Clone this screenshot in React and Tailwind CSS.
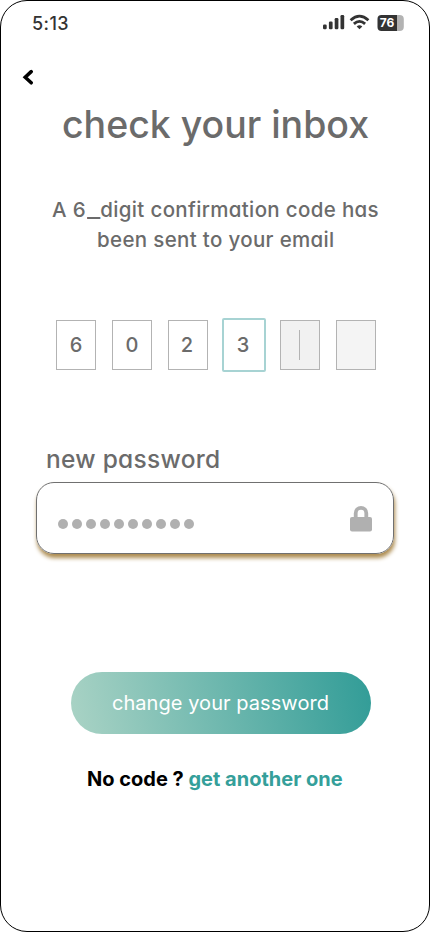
const rounded = "font-['Inter',sans-serif] font-[470] text-[#6b6b6b] [font-feature-settings:'cv11'] whitespace-nowrap";

function StatusBar() {
  return (
    <header className="flex h-[44px] items-center justify-between pl-[31px] pr-[25px]">
      <span className="mt-[2px] text-[18px] leading-6 font-medium tracking-[0.4px] text-[#333]">5:13</span>
      <div className="flex items-center">
        <svg width="82" height="18" viewBox="322 14 82 18" fill="#333">
          <rect x="323" y="24.500" width="3.700" height="4.800" rx="1.200" />
          <rect x="328.900" y="21.500" width="3.700" height="7.800" rx="1.200" />
          <rect x="334.700" y="18" width="3.700" height="11.300" rx="1.200" />
          <rect x="340.500" y="15" width="3.700" height="14.300" rx="1.200" />
          <g fill="none" stroke="#333" strokeWidth="2.800">
            <path d="M350.600 20.200Q359.500 12.100 368.400 20.200" />
            <path d="M353.900 23.900Q359.500 18.800 365.100 23.900" />
          </g>
          <path d="M356.700 26.500Q359.500 24 362.300 26.500L359.500 29.300Z" />
          <path d="M381.500 15H397V31H381.500Q377.500 31 377.500 27V19Q377.500 15 381.500 15Z" />
          <path d="M397 15H399.500Q403.800 15 403.800 19V27Q403.800 31 399.500 31H397Z" fill="#b3b3b3" />
          <text x="379.700" y="27.400" fontSize="12" fontWeight="700" fill="#fff" fontFamily="Inter, sans-serif">76</text>
        </svg>
      </div>
    </header>
  );
}

function CodeInput() {
  const box = "flex h-[50px] w-10 items-center justify-center border border-[#b3b3b3]";
  return (
    <div className={"mt-[63px] flex h-[54px] items-center pl-[55px] text-[20px] " + rounded}>
      <div className={box}>6</div>
      <div className={box + " ml-4"}>0</div>
      <div className={box + " ml-4 pr-[2px]"}>2</div>
      <div className="ml-[14px] flex h-[54px] w-11 items-center justify-center rounded-[2px] border-2 border-[#a7d3d3] pr-[2px]">3</div>
      <div className={box + " ml-[14px] bg-[#f1f1f1]"}>
        <span className="mr-[2px] h-[30px] w-px bg-[#b3b3b3]" />
      </div>
      <div className={box + " ml-4 bg-[#f4f4f4]"} />
    </div>
  );
}

export default function App() {
  return (
    <main className="h-[932px] w-[430px] overflow-hidden rounded-[27px] border border-black bg-white font-['Inter',sans-serif]">
      <StatusBar />
      <button className="mt-[23px] ml-[21px] block h-[17px] w-[12px]" aria-label="Back">
        <svg width="12" height="17" viewBox="0 0 12 17" fill="none" stroke="#000" strokeWidth="3.500" strokeLinecap="round">
          <path d="M9.200 3.600L3.200 9.200L9.200 14.800" />
        </svg>
      </button>
      <h1 className={"mt-[15px] pl-[61px] text-[37.5px] leading-[50px] tracking-[-0.02px] " + rounded}>check your inbox</h1>
      <div className={"mt-[45px] text-[20.5px] leading-[30px] tracking-[0.34px] " + rounded}>
        <p className="pl-[51px]">A 6<span className="mr-[3.5px] ml-[1px] inline-block origin-left scale-x-140">_</span>digit confirmation code has</p>
        <p className="pl-[96px]">been sent to your email</p>
      </div>
      <CodeInput />
      <label className={"mt-[70px] block pl-[45px] text-[24.5px] leading-[34px] tracking-[0.28px] " + rounded}>new password</label>
      <div className="mt-[6px] ml-[35px] flex h-[72px] w-[358px] items-center justify-between rounded-[18px] border border-[#707070] pr-[21px] pl-[21px] shadow-[1px_4px_4px_#ad8c50]">
        <div className="mt-[11px] flex gap-1">
          {Array.from({ length: 10 }, (_, i) => (
            <span key={i} className="size-[10px] rounded-full bg-[#b0b0b0]" />
          ))}
        </div>
        <svg width="22" height="26" viewBox="0 0 22 26" className="mt-px">
          <rect y="11" width="22" height="14.500" rx="2" fill="#b0b0b0" />
          <path d="M5.700 12V7.200a5.300 5.300 0 0 1 10.600 0V12" fill="none" stroke="#b0b0b0" strokeWidth="3.800" />
        </svg>
      </div>
      <button className="mt-[118px] ml-[70px] flex h-[62px] w-[300px] items-center justify-center rounded-full bg-[linear-gradient(78deg,#aad3c5_0%,#319c97_100%)] pr-px text-[20px] tracking-[0.06px] whitespace-nowrap text-white">change your password</button>
      <p className="mt-[31px] pl-[86px] text-[20px] leading-7 font-bold whitespace-nowrap text-black">
        No code ? <a className="text-[#359f9a]">get another one</a>
      </p>
    </main>
  );
}
